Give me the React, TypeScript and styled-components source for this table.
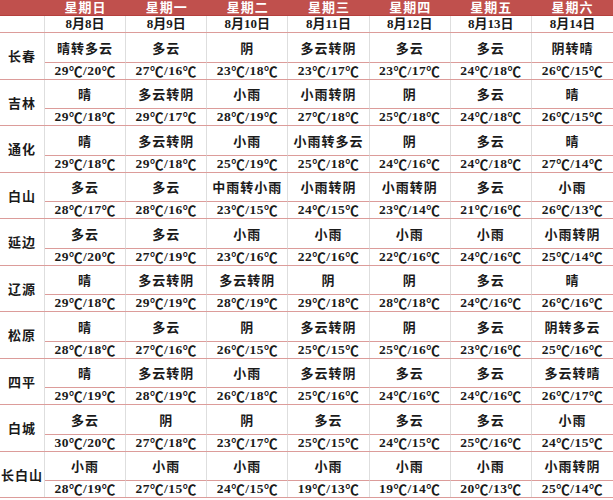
import { FC } from "react";
import styled, { createGlobalStyle } from "styled-components";

const GlobalStyle = createGlobalStyle`
  body {
    margin: 0;
    background: #ffffff;
    font-family: "Liberation Serif", "Noto Sans CJK SC", serif;
  }
`;

const Table = styled.div`
  width: 613px;
  color: #1a1a1a;
`;

const HeaderRow = styled.div`
  display: grid;
  grid-template-columns: 45px repeat(7, 1fr);
  height: 15px;
  background-color: #c0504d;
  border-bottom: 1px solid #b5403d;
`;

const HeaderCell = styled.div`
  color: #ffffff;
  font-size: 13px;
  font-weight: bold;
  line-height: 15px;
  letter-spacing: 1px;
  text-align: center;
  overflow: hidden;
`;

const DateRow = styled.div`
  display: grid;
  grid-template-columns: 45px repeat(7, 1fr);
  height: 16px;
  border-bottom: 1px solid #dc9c9a;
`;

const DateCell = styled.div`
  font-size: 13px;
  font-weight: bold;
  line-height: 16px;
  text-align: center;
  border-right: 1px solid #dedede;
  &:last-child {
    border-right: none;
  }
`;

const CityRow = styled.div`
  display: grid;
  grid-template-columns: 45px repeat(7, 1fr);
  grid-template-rows: 29.5px 16px;
  border-bottom: 1px solid #dc9c9a;
`;

const CityName = styled.div`
  grid-row: 1 / span 2;
  display: flex;
  align-items: center;
  justify-content: center;
  font-size: 13px;
  font-weight: bold;
  letter-spacing: 1px;
  border-right: 1px solid #dedede;
  white-space: nowrap;
`;

const Cell = styled.div<{ $top?: boolean }>`
  display: flex;
  align-items: center;
  justify-content: center;
  font-size: ${(p) => (p.$top ? "13px" : "13.5px")};
  font-weight: bold;
  white-space: nowrap;
  letter-spacing: ${(p) => (p.$top ? "1px" : "0.5px")};
  border-right: 1px solid #dedede;
  border-bottom: ${(p) => (p.$top ? "1px solid #dc9c9a" : "none")};
  &:nth-child(8),
  &:nth-child(15) {
    border-right: none;
  }
`;

const Deg = styled.span`
  font-family: "Noto Sans CJK SC", sans-serif;
  font-weight: bold;
`;

const days = ["星期日", "星期一", "星期二", "星期三", "星期四", "星期五", "星期六"];
const dates = ["8月8日", "8月9日", "8月10日", "8月11日", "8月12日", "8月13日", "8月14日"];

type CityData = {
  name: string;
  weather: string[];
  temps: string[];
};

const cities: CityData[] = [
  {
    name: "长春",
    weather: ["晴转多云", "多云", "阴", "多云转阴", "多云", "多云", "阴转晴"],
    temps: ["29℃/20℃", "27℃/16℃", "23℃/18℃", "23℃/17℃", "23℃/17℃", "24℃/18℃", "26℃/15℃"],
  },
  {
    name: "吉林",
    weather: ["晴", "多云转阴", "小雨", "小雨转阴", "阴", "多云", "晴"],
    temps: ["29℃/18℃", "29℃/17℃", "28℃/19℃", "27℃/18℃", "25℃/18℃", "24℃/18℃", "26℃/15℃"],
  },
  {
    name: "通化",
    weather: ["晴", "多云转阴", "小雨", "小雨转多云", "阴", "多云", "晴"],
    temps: ["29℃/18℃", "29℃/18℃", "25℃/19℃", "25℃/18℃", "24℃/16℃", "24℃/18℃", "27℃/14℃"],
  },
  {
    name: "白山",
    weather: ["多云", "多云", "中雨转小雨", "小雨转阴", "小雨转阴", "多云", "小雨"],
    temps: ["28℃/17℃", "28℃/16℃", "23℃/15℃", "24℃/15℃", "23℃/14℃", "21℃/16℃", "26℃/13℃"],
  },
  {
    name: "延边",
    weather: ["多云", "多云", "小雨", "小雨", "小雨", "小雨", "小雨转阴"],
    temps: ["29℃/20℃", "27℃/19℃", "23℃/16℃", "22℃/16℃", "22℃/16℃", "24℃/16℃", "25℃/14℃"],
  },
  {
    name: "辽源",
    weather: ["晴", "多云转阴", "多云转阴", "阴", "阴", "多云", "晴"],
    temps: ["29℃/18℃", "29℃/19℃", "28℃/19℃", "29℃/18℃", "28℃/18℃", "24℃/16℃", "26℃/16℃"],
  },
  {
    name: "松原",
    weather: ["晴", "多云", "阴", "多云转阴", "阴", "多云", "阴转多云"],
    temps: ["28℃/18℃", "27℃/16℃", "26℃/15℃", "25℃/15℃", "25℃/16℃", "23℃/16℃", "25℃/16℃"],
  },
  {
    name: "四平",
    weather: ["晴", "多云转阴", "小雨", "多云转阴", "多云", "多云", "多云转晴"],
    temps: ["29℃/19℃", "28℃/19℃", "26℃/18℃", "25℃/16℃", "24℃/16℃", "24℃/16℃", "26℃/17℃"],
  },
  {
    name: "白城",
    weather: ["多云", "阴", "阴", "多云", "多云", "多云", "小雨"],
    temps: ["30℃/20℃", "27℃/18℃", "23℃/17℃", "25℃/15℃", "24℃/15℃", "25℃/16℃", "24℃/15℃"],
  },
  {
    name: "长白山",
    weather: ["小雨", "小雨", "小雨", "小雨", "小雨", "小雨", "小雨转阴"],
    temps: ["28℃/19℃", "27℃/15℃", "24℃/15℃", "19℃/13℃", "19℃/14℃", "20℃/13℃", "25℃/14℃"],
  },
];

const Temp: FC<{ value: string }> = ({ value }) => {
  const [hi, lo] = value.split("/");
  return (
    <>
      {hi.replace("℃", "")}
      <Deg>℃</Deg>/{lo.replace("℃", "")}
      <Deg>℃</Deg>
    </>
  );
};

const CityBlock: FC<{ city: CityData }> = ({ city }) => (
  <CityRow>
    <CityName>{city.name}</CityName>
    {city.weather.map((w, i) => (
      <Cell key={`w${i}`} $top style={{ gridRow: 1, gridColumn: i + 2 }}>
        {w}
      </Cell>
    ))}
    {city.temps.map((t, i) => (
      <Cell key={`t${i}`} style={{ gridRow: 2, gridColumn: i + 2 }}>
        <Temp value={t} />
      </Cell>
    ))}
  </CityRow>
);

export default function App() {
  return (
    <>
      <GlobalStyle />
      <Table>
        <HeaderRow>
          <HeaderCell />
          {days.map((d) => (
            <HeaderCell key={d}>{d}</HeaderCell>
          ))}
        </HeaderRow>
        <DateRow>
          <DateCell />
          {dates.map((d) => (
            <DateCell key={d}>{d}</DateCell>
          ))}
        </DateRow>
        {cities.map((c) => (
          <CityBlock key={c.name} city={c} />
        ))}
      </Table>
    </>
  );
}
